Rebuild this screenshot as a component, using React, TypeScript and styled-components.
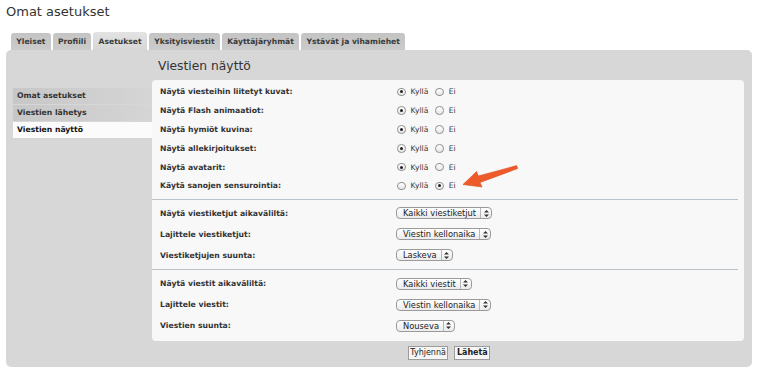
import { createGlobalStyle, styled } from "styled-components";

const GlobalStyle = createGlobalStyle`
  html, body {
    margin: 0;
    padding: 0;
    background: #ffffff;
  }
  body {
    font-family: "DejaVu Sans", Verdana, sans-serif;
    color: #333;
  }
`;

const Page = styled.div`
  width: 761px;
  height: 377px;
  padding: 0 9px 0 6px;
  box-sizing: border-box;
`;

const Title = styled.h1`
  margin: 4px 0 0;
  font-size: 13px;
  line-height: 16px;
  font-weight: normal;
  color: #333;
`;

const Tabs = styled.div`
  display: flex;
  align-items: flex-end;
  gap: 2px;
  height: 18px;
  margin: 12px 0 0 5px;
`;

const Tab = styled.div<{ $active?: boolean }>`
  height: ${(p) => (p.$active ? 18 : 17)}px;
  line-height: ${(p) => (p.$active ? 19 : 17)}px;
  padding: 0 5.3px;
  border-radius: 3px 3px 0 0;
  background: ${(p) => (p.$active ? "linear-gradient(#e3e3e3, #d7d7d7)" : "linear-gradient(#c4c4c4, #cbcbcb)")};
  font-size: 7.6px;
  font-weight: bold;
  color: #3a3a3a;
  white-space: nowrap;
`;

const Panel = styled.div`
  display: flex;
  height: 317px;
  padding: 0 8px 0 7px;
  background: #d7d7d7;
  border-radius: 5px;
`;

const Sidebar = styled.div`
  width: 139px;
  padding-top: 38px;
  display: flex;
  flex-direction: column;
`;

const SideItem = styled.div<{ $active?: boolean }>`
  height: 16px;
  line-height: 16px;
  padding-left: 4px;
  margin-bottom: ${(p) => (p.$active ? 0 : 1)}px;
  background: ${(p) => (p.$active ? "#fbfbfb" : "linear-gradient(to right, #c7c7c7, #d5d5d5)")};
  font-size: 7.7px;
  font-weight: bold;
  color: ${(p) => (p.$active ? "#111" : "#333")};
`;

const Main = styled.div`
  flex: 1;
  display: flex;
  flex-direction: column;
`;

const Heading = styled.h2`
  margin: 0;
  height: 30px;
  padding: 2px 0 0 6px;
  box-sizing: border-box;
  line-height: 28px;
  font-size: 12.3px;
  font-weight: normal;
  color: #333;
`;

const ContentBox = styled.div`
  position: relative;
  height: 261px;
  background: #f8f8f8;
  border-radius: 4px;
`;

const Group = styled.div<{ $top: number; $bottom: number }>`
  padding: ${(p) => p.$top}px 0 ${(p) => p.$bottom}px;
`;

const Row = styled.div<{ $h: number }>`
  display: grid;
  grid-template-columns: 236px 1fr;
  align-items: center;
  height: ${(p) => p.$h}px;
  padding-left: 8px;
`;

const Label = styled.div`
  font-size: 7.7px;
  font-weight: bold;
  color: #333;
  white-space: nowrap;
`;

const Divider = styled.div`
  height: 1px;
  margin-right: 6px;
  background: #bac2ca;
`;

const RadioGroup = styled.div`
  display: flex;
  align-items: center;
  padding-left: 1px;
`;

const Radio = styled.span<{ $checked?: boolean }>`
  position: relative;
  width: 8.5px;
  height: 8.5px;
  box-sizing: border-box;
  border: 1px solid #909090;
  border-radius: 50%;
  background: linear-gradient(#ffffff, #e6e6e6);
  margin-right: 5px;

  &::after {
    content: "";
    display: ${(p) => (p.$checked ? "block" : "none")};
    position: absolute;
    left: 1.75px;
    top: 1.75px;
    width: 3px;
    height: 3px;
    border-radius: 50%;
    background: #222;
  }
`;

const RadioText = styled.span`
  font-size: 7.6px;
  color: #333;
  margin-right: 7px;
`;

const Select = styled.div`
  display: inline-flex;
  align-items: stretch;
  justify-self: start;
  height: 12px;
  box-sizing: border-box;
  border: 1px solid #9a9a9a;
  border-radius: 4px;
  background: linear-gradient(#ffffff, #ebebeb);
`;

const SelectText = styled.span`
  padding: 0 4px 0 6px;
  font-size: 8.3px;
  line-height: 10px;
  color: #222;
  white-space: nowrap;
`;

const SelectArrow = styled.span`
  display: flex;
  align-items: center;
  justify-content: center;
  width: 10px;
  border-left: 1px solid #b8b8b8;
`;

const Buttons = styled.div`
  display: flex;
  justify-content: center;
  gap: 6px;
  padding: 5px 0 0 2px;
`;

const Button = styled.button<{ $bold?: boolean }>`
  height: 14px;
  padding: 0 1.5px;
  border: 1px solid #9c9c9c;
  border-radius: 0;
  background: #f6f6f6;
  font-family: "DejaVu Sans", Verdana, sans-serif;
  font-size: 8px;
  line-height: 12px;
  font-weight: ${(p) => (p.$bold ? "bold" : "normal")};
  color: #222;
`;

const Arrow = styled.svg`
  position: absolute;
  left: 300px;
  top: 82px;
  width: 70px;
  height: 30px;
  overflow: visible;
`;

const radios = [
  { label: "Näytä viesteihin liitetyt kuvat:", yes: true },
  { label: "Näytä Flash animaatiot:", yes: true },
  { label: "Näytä hymiöt kuvina:", yes: true },
  { label: "Näytä allekirjoitukset:", yes: true },
  { label: "Näytä avatarit:", yes: true },
  { label: "Käytä sanojen sensurointia:", yes: false },
];

const topicSelects = [
  { label: "Näytä viestiketjut aikaväliltä:", value: "Kaikki viestiketjut" },
  { label: "Lajittele viestiketjut:", value: "Viestin kellonaika" },
  { label: "Viestiketjujen suunta:", value: "Laskeva" },
];

const postSelects = [
  { label: "Näytä viestit aikaväliltä:", value: "Kaikki viestit" },
  { label: "Lajittele viestit:", value: "Viestin kellonaika" },
  { label: "Viestien suunta:", value: "Nouseva" },
];

const tabs = ["Yleiset", "Profiili", "Asetukset", "Yksityisviestit", "Käyttäjäryhmät", "Ystävät ja vihamiehet"];

const UpDown = () => (
  <svg width="5" height="7" viewBox="0 0 5 7">
    <path d="M2.5 0 L5 2.6 L0 2.6 Z M2.5 7 L5 4.4 L0 4.4 Z" fill="#333" />
  </svg>
);

const SelectBox = ({ value }: { value: string }) => (
  <Select>
    <SelectText>{value}</SelectText>
    <SelectArrow>
      <UpDown />
    </SelectArrow>
  </Select>
);

export default function App() {
  return (
    <>
      <GlobalStyle />
      <Page>
        <Title>Omat asetukset</Title>
        <Tabs>
          {tabs.map((t) => (
            <Tab key={t} $active={t === "Asetukset"}>
              {t}
            </Tab>
          ))}
        </Tabs>
        <Panel>
          <Sidebar>
            <SideItem>Omat asetukset</SideItem>
            <SideItem>Viestien lähetys</SideItem>
            <SideItem $active>Viestien näyttö</SideItem>
          </Sidebar>
          <Main>
            <Heading>Viestien näyttö</Heading>
            <ContentBox>
              <Group $top={2.5} $bottom={3.7}>
                {radios.map((r) => (
                  <Row key={r.label} $h={18.8}>
                    <Label>{r.label}</Label>
                    <RadioGroup>
                      <Radio $checked={r.yes} />
                      <RadioText>Kyllä</RadioText>
                      <Radio $checked={!r.yes} />
                      <RadioText>Ei</RadioText>
                    </RadioGroup>
                  </Row>
                ))}
              </Group>
              <Divider />
              <Group $top={3} $bottom={3.5}>
                {topicSelects.map((s) => (
                  <Row key={s.label} $h={21}>
                    <Label>{s.label}</Label>
                    <SelectBox value={s.value} />
                  </Row>
                ))}
              </Group>
              <Divider />
              <Group $top={3} $bottom={4.5}>
                {postSelects.map((s) => (
                  <Row key={s.label} $h={21}>
                    <Label>{s.label}</Label>
                    <SelectBox value={s.value} />
                  </Row>
                ))}
              </Group>
              {/* Skitch-style callout arrow pointing at the "Ei" option */}
              <Arrow viewBox="0 0 70 30">
                <path
                  d="M11 22.5 L30 25 L28 20.5 Q47 13.5 65.6 6.6 L64.6 3.6 Q45 9 26.2 14 L24.6 9.5 Z"
                  fill="#ef5a2a"
                  stroke="#d94b1e"
                  strokeWidth="0.6"
                  strokeLinejoin="round"
                />
              </Arrow>
            </ContentBox>
            <Buttons>
              <Button>Tyhjennä</Button>
              <Button $bold>Lähetä</Button>
            </Buttons>
          </Main>
        </Panel>
      </Page>
    </>
  );
}
